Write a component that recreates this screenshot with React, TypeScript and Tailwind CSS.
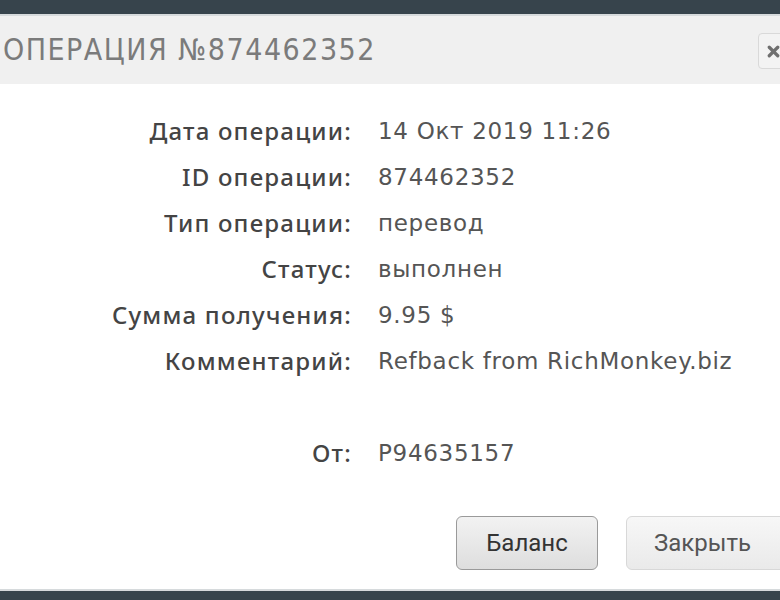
import React from "react";
import { X } from "lucide-react";

const ROWS: { label: string; value: string }[] = [
  { label: "Дата операции:", value: "14 Окт 2019 11:26" },
  { label: "ID операции:", value: "874462352" },
  { label: "Тип операции:", value: "перевод" },
  { label: "Статус:", value: "выполнен" },
  { label: "Сумма получения:", value: "9.95 $" },
  { label: "Комментарий:", value: "Refback from RichMonkey.biz" },
  { label: "", value: "" },
  { label: "От:", value: "P94635157" },
];

export default function App() {
  return (
    <div className="w-[780px] h-[600px] overflow-hidden flex flex-col bg-white">
      <div className="h-[14px] bg-[#37444c] shrink-0" />
      <div className="h-[2px] bg-[#d6dadc] shrink-0" />

      {/* Header */}
      <div className="h-[68px] shrink-0 bg-[#f0f0f0] flex items-center justify-between pl-[3px]">
        <h1
          className="text-[30px] tracking-[1.5px] text-[#7b7b7b] leading-none"
          style={{ fontFamily: '"DejaVu Sans Condensed", "Liberation Sans Narrow", sans-serif' }}
        >
          ОПЕРАЦИЯ №874462352
        </h1>
        <button className="shrink-0 w-[40px] h-[36px] -mr-[18px] mt-[2px] rounded-[4px] border border-[#d9d9d9] bg-[#f3f3f3] flex items-center pl-[6px] text-[#6f6f6f]">
          <X size={17} strokeWidth={4.5} />
        </button>
      </div>

      {/* Body */}
      <div className="flex-1 flex flex-col pt-[24px]">
        {ROWS.map((r, i) => (
          <div key={i} className="h-[46px] flex items-center">
            <div className="w-[352px] shrink-0 text-right text-[24px] font-medium tracking-[1.2px] text-[#444] font-['Noto_Sans',sans-serif] whitespace-nowrap">
              {r.label}
            </div>
            <div className="pl-[26px] text-[23px] tracking-[0.7px] text-[#555] font-['DejaVu_Sans',sans-serif] whitespace-nowrap">
              {r.value}
            </div>
          </div>
        ))}

        <div className="flex mt-[40px] pl-[456px] gap-[28px] font-['Roboto',sans-serif]">
          <button className="shrink-0 w-[142px] h-[54px] rounded-[6px] border border-[#9a9a9a] bg-gradient-to-b from-[#f2f2f2] to-[#dedede] text-[24px] text-[#333]">
            Баланс
          </button>
          <button className="shrink-0 w-[170px] h-[54px] rounded-[6px] border border-[#d8d8d8] bg-gradient-to-b from-[#f7f7f7] to-[#eaeaea] text-[24px] text-[#555] text-left pl-[27px]">
            Закрыть
          </button>
        </div>
      </div>

      <div className="h-[2px] bg-[#d6dadc] shrink-0" />
      <div className="h-[9px] bg-[#37444c] shrink-0" />
    </div>
  );
}
